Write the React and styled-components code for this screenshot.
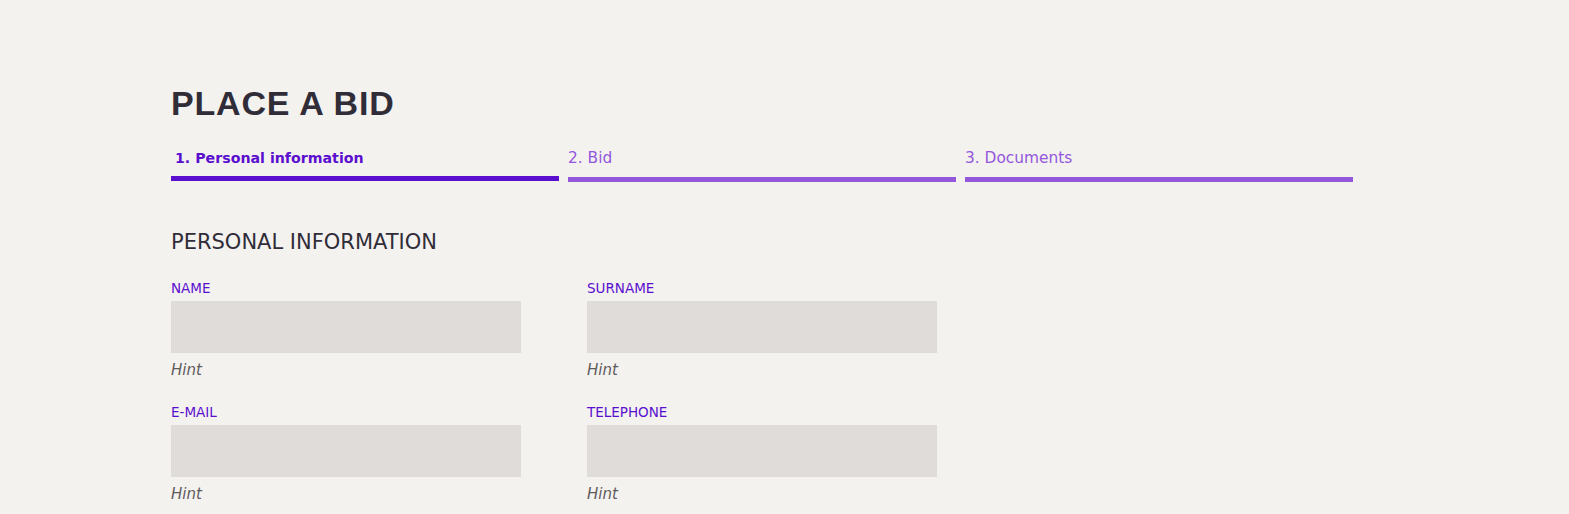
import React from 'react';
import styled, { createGlobalStyle } from 'styled-components';

const GlobalStyle = createGlobalStyle`
  html, body {
    margin: 0;
    padding: 0;
    background: #f4f2ef;
  }
  body {
    font-family: 'DejaVu Sans', 'Noto Sans', sans-serif;
    color: #2f2c36;
  }
`;

const ACTIVE = '#5a0fce';
const INACTIVE = '#9357dc';

const Page = styled.div`
  padding: 83px 0 0 171px;
  width: 1182px;
`;

const Title = styled.h1`
  margin: 0;
  font-family: 'Liberation Sans', Arial, sans-serif;
  font-size: 34px;
  line-height: 40px;
  font-weight: 700;
  letter-spacing: 0.8px;
  color: #302d39;
`;

const Steps = styled.div`
  display: grid;
  grid-template-columns: repeat(3, 1fr);
  gap: 9px;
  margin-top: 25px;
`;

const Step = styled.div`
  display: flex;
  flex-direction: column;
  gap: ${(p) => (p.$active ? '8px' : '9px')};
  color: ${(p) => (p.$active ? ACTIVE : INACTIVE)};
  font-size: ${(p) => (p.$active ? '14.2px' : '15.4px')};
  line-height: 20px;
  font-weight: ${(p) => (p.$active ? 700 : 400)};
  padding-left: ${(p) => (p.$active ? '4px' : '0')};

  &::after {
    content: '';
    display: block;
    height: 5px;
    margin-left: ${(p) => (p.$active ? '-4px' : '0')};
    background: ${(p) => (p.$active ? ACTIVE : INACTIVE)};
  }
`;

const Section = styled.section`
  margin-top: 48px;
`;

const SectionTitle = styled.h2`
  margin: 0;
  font-size: 21px;
  line-height: 24px;
  font-weight: 500;
  color: #302d39;
`;

const Grid = styled.div`
  display: grid;
  grid-template-columns: 350px 350px;
  column-gap: 66px;
  row-gap: 25px;
  margin-top: 26px;
`;

const Field = styled.div`
  display: flex;
  flex-direction: column;
`;

const Label = styled.label`
  font-size: 13.5px;
  line-height: 16px;
  font-weight: 500;
  color: ${ACTIVE};
  margin-bottom: 5px;
`;

const Input = styled.input`
  box-sizing: border-box;
  height: 52px;
  border: none;
  outline: none;
  background: #e0dcd9;
  padding: 0 12px;
  font: inherit;
`;

const Hint = styled.span`
  margin-top: 8px;
  font-size: 15px;
  line-height: 18px;
  font-style: italic;
  color: #5f5b5b;
`;

const fields = ['NAME', 'SURNAME', 'E-MAIL', 'TELEPHONE'];
const steps = ['1. Personal information', '2. Bid', '3. Documents'];

export default function App() {
  return (
    <>
      <GlobalStyle />
      <Page>
        <Title>PLACE A BID</Title>
        <Steps>
          {steps.map((s, i) => (
            <Step key={s} $active={i === 0}>
              {s}
            </Step>
          ))}
        </Steps>
        <Section>
          <SectionTitle>PERSONAL INFORMATION</SectionTitle>
          <Grid>
            {fields.map((f) => (
              <Field key={f}>
                <Label>{f}</Label>
                <Input />
                <Hint>Hint</Hint>
              </Field>
            ))}
          </Grid>
        </Section>
      </Page>
    </>
  );
}
